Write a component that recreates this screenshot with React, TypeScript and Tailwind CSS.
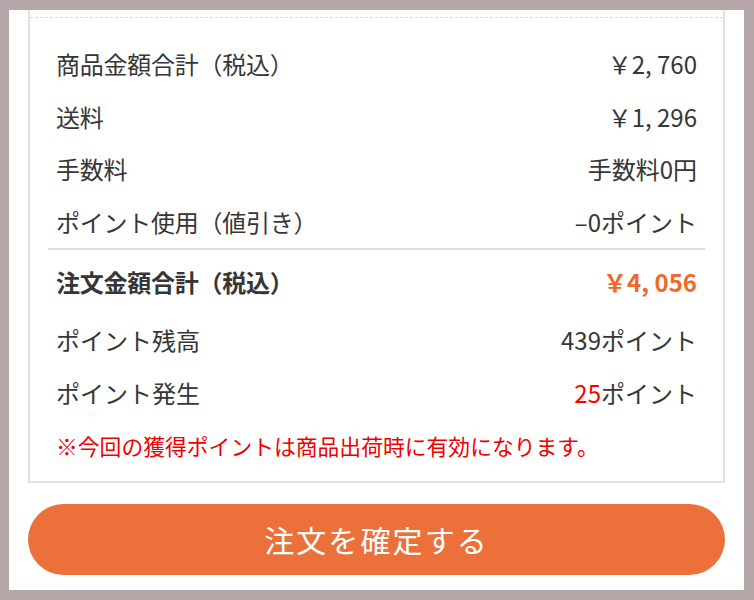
const rows = [
  { label: '商品金額合計（税込）', value: '￥2, 760' },
  { label: '送料', value: '￥1, 296' },
  { label: '手数料', value: '手数料0円' },
  { label: 'ポイント使用（値引き）', value: '–0ポイント' },
];

export default function App() {
  return (
    <div
      className="w-[754px] h-[600px] bg-[#b4a5a6] pt-[10px] pl-[9px] pr-[10px] pb-[10px]"
      style={{ fontFamily: '"Noto Sans CJK JP", "Noto Sans", sans-serif' }}
    >
      <div className="h-full bg-white px-[19px] overflow-hidden">
        {/* 注文内容 */}
        <div className="border-2 border-t-0 border-[#e2e2e2] pt-[7px]">
          <div className="border-t border-dashed border-[#d8d8d8]" />
          <div className="px-[18px] pt-[20px] text-[#363636] text-[24px]">
            {rows.map((r) => (
              <div key={r.label} className="h-[52.5px] flex items-center justify-between px-2">
                <span className="tracking-[-0.01em]">{r.label}</span>
                <span>{r.value}</span>
              </div>
            ))}
            <div className="h-[2px] bg-[#dedede]" />
            <div className="h-[64px] flex items-center justify-between px-2 font-bold">
              <span className="tracking-[-0.01em]">注文金額合計（税込）</span>
              <span className="text-[#ee6b2d]">￥4, 056</span>
            </div>
            <div className="h-[52.5px] flex items-center justify-between px-2">
              <span>ポイント残高</span>
              <span>439ポイント</span>
            </div>
            <div className="h-[52.5px] flex items-center justify-between px-2">
              <span>ポイント発生</span>
              <span>
                <span className="text-[#ff0000]">25</span>ポイント
              </span>
            </div>
            <p className="px-2 pt-[14px] pb-[22px] h-[62px] leading-[26px] text-[21.8px] text-[#ee0000]">
              ※今回の獲得ポイントは商品出荷時に有効になります。
            </p>
          </div>
        </div>

        <button className="mt-[21px] w-full h-[71px] rounded-full bg-[#ec703a] text-white text-[30px] tracking-[0.07em] flex items-center justify-center">
          注文を確定する
        </button>
      </div>
    </div>
  );
}
